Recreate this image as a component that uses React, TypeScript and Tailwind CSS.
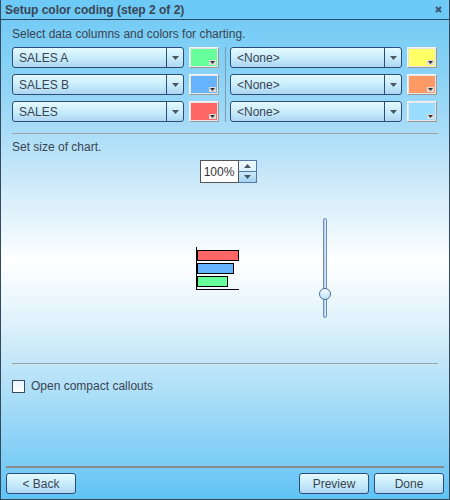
import React from "react";

const font = { fontFamily: '"Liberation Sans", Arial, sans-serif' };

function Arrow({ up = false }: { up?: boolean }) {
  return (
    <svg width="7" height="4" viewBox="0 0 7 4" className="block">
      <path d={up ? "M0 4 L3.5 0 L7 4 Z" : "M0 0 L7 0 L3.5 4 Z"} fill="#4a5560" />
    </svg>
  );
}

function Dropdown({ label }: { label: string }) {
  return (
    <div className="flex h-[21px] w-[172px] rounded-[3px] border border-[#2d4d78] bg-[linear-gradient(#e4faff,#c6ebfb_55%,#aed6f2)] text-[12px] text-[#3a4450]">
      <div className="flex flex-1 items-center pl-[6px]">{label}</div>
      <div className="flex w-[17px] items-center justify-center border-l border-[#2d4d78]">
        <Arrow />
      </div>
    </div>
  );
}

function Swatch({ color }: { color: string }) {
  return (
    <div className="relative h-[21px] w-[30px] border border-t-[#f4f4f4] border-l-[#f4f4f4] border-r-[#9a9a9a] border-b-[#9a9a9a] bg-[#e6e6e6] p-[1px]">
      <div className="h-full w-full" style={{ background: color }} />
      <div className="absolute bottom-[2px] right-[2px] flex h-[5px] w-[7px] items-center justify-center bg-[#ddd]">
        <svg width="5" height="3" viewBox="0 0 5 3">
          <path d="M0 0 L5 0 L2.5 3 Z" fill="#333" />
        </svg>
      </div>
    </div>
  );
}

function Btn({ label, w }: { label: string; w: string }) {
  return (
    <div
      className={`flex h-[21px] ${w} items-center justify-center rounded-[3px] border border-[#2d4d78] bg-[linear-gradient(#e4faff,#c6ebfb_55%,#aed6f2)] text-[12px] text-[#3a4450]`}
    >
      {label}
    </div>
  );
}

const rows = [
  { left: "SALES A", lc: "#66ff99", rc: "#ffff66" },
  { left: "SALES B", lc: "#66b3ff", rc: "#ff9966" },
  { left: "SALES", lc: "#ff6666", rc: "#99ddff" },
];

export default function App() {
  return (
    <div
      style={font}
      className="flex h-[500px] w-[450px] flex-col border border-t-0 border-[#34495e] bg-[linear-gradient(#6dc9f5_0px,#8cd3f6_80px,#a9dcf7_130px,#d2ecfa_190px,#ffffff_262px,#e0f2fb_320px,#b6e2f8_380px,#8dd2f6_440px,#5fc3f5_500px)]"
    >
      {/* title bar */}
      <div className="flex h-[20px] shrink-0 items-center justify-between border-b border-[#2b4863] bg-[#6dc9f5] pl-[4px] pr-[7px]">
        <span className="text-[12px] font-bold text-[#3a4654]">Setup color coding (step 2 of 2)</span>
        <svg width="7" height="7" viewBox="0 0 7 7">
          <path d="M1 1 L6 6 M6 1 L1 6" stroke="#3d5570" strokeWidth="2" />
        </svg>
      </div>

      <div className="flex flex-1 flex-col px-[11px]">
        <div className="mt-[7px] h-[14px] text-[12px] leading-[14px] text-[#3a4450]">
          Select data columns and colors for charting.
        </div>

        <div className="mt-[6px] flex">
          <div className="flex flex-col gap-[6px]">
            {rows.map((r) => (
              <div key={r.left} className="flex items-center gap-[5px]">
                <Dropdown label={r.left} />
                <Swatch color={r.lc} />
              </div>
            ))}
          </div>
          <div className="ml-[6px] mr-[4px] w-[1px] bg-[#7f9cb0]" />
          <div className="flex flex-col gap-[6px]">
            {rows.map((r) => (
              <div key={r.rc} className="flex items-center gap-[5px]">
                <Dropdown label="<None>" />
                <Swatch color={r.rc} />
              </div>
            ))}
          </div>
        </div>

        <div className="mt-[11px] h-[1px] bg-[#a0a0a0]" />

        <div className="mt-[6px] h-[14px] text-[12px] leading-[14px] text-[#3a4450]">Set size of chart.</div>

        <div className="mt-[6px] flex justify-center pl-[6px]">
          <div className="flex h-[23px]">
            <div className="flex w-[39px] items-center justify-center border border-[#555] bg-white text-[12px] text-[#333]">
              100%
            </div>
            <div className="flex w-[18px] flex-col border border-l-0 border-[#5577a0]">
              <div className="flex flex-1 items-center justify-center border-b border-[#5577a0] bg-[linear-gradient(#eefbff,#d8f2fd)]">
                <Arrow up />
              </div>
              <div className="flex flex-1 items-center justify-center bg-[linear-gradient(#c8ebfb,#a6d3f0)]">
                <Arrow />
              </div>
            </div>
          </div>
        </div>

        {/* chart preview area */}
        <div className="flex h-[180px]">
          <div className="ml-[184px] mt-[64px] flex h-[43px] w-[43px] flex-col gap-[2px] border-b border-l border-black pt-[3px]">
            <div className="h-[11px] w-[42px] border border-black bg-[#ff6666]" />
            <div className="h-[11px] w-[37px] border border-black bg-[#66b3ff]" />
            <div className="h-[11px] w-[31px] border border-black bg-[#66ff99]" />
          </div>
          <div className="relative ml-[84px] mt-[35px] h-[100px] w-[4px] rounded-[2px] border border-[#6f8fb8] bg-[linear-gradient(90deg,#a8c8ec,#dff2ff)]">
            <div className="absolute left-[-5px] top-[69px] h-[12px] w-[12px] rounded-full border border-[#4d6f99] bg-[linear-gradient(#f4fcff,#bfe3f8)]" />
          </div>
        </div>

        <div className="h-[1px] bg-[#a0a0a0]" />

        <div className="mt-[13px] flex items-center gap-[6px]">
          <div className="h-[13px] w-[13px] border border-[#3a4a5a] bg-[linear-gradient(#e8f6fd,#ffffff)]" />
          <span className="text-[12px] text-[#3a4450]">Open compact callouts</span>
        </div>

        <div className="flex-1" />
      </div>

      <div className="mx-[5px] h-[2px] bg-[#8a8a8a]" />
      <div className="flex h-[31px] shrink-0 items-start px-[5px] pt-[5px]">
        <Btn label="< Back" w="w-[70px]" />
        <div className="flex-1" />
        <Btn label="Preview" w="w-[70px]" />
        <div className="w-[5px]" />
        <Btn label="Done" w="w-[70px]" />
      </div>
    </div>
  );
}
